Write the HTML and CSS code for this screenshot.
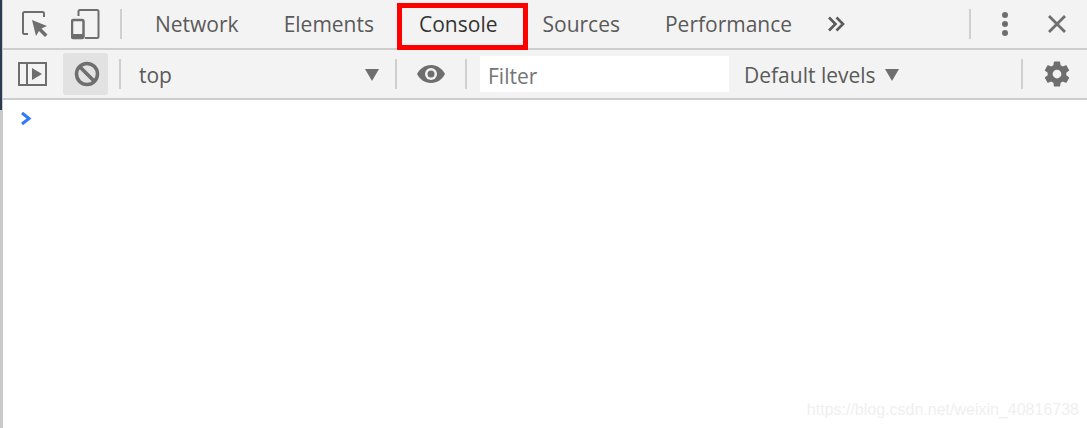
FILE: index.html
```html
<!DOCTYPE html>
<html lang="en">
<head>
  <meta charset="UTF-8">
  <title>DevTools Console</title>
  <link rel="stylesheet" href="styles.css">
</head>
<body>
  <div class="devtools">
    <div class="toolbar main-bar">
      <button class="icon-btn inspect-btn" aria-label="Select element">
        <svg width="26" height="26" viewBox="0 0 26 26">
          <path d="M6 23H2.500Q1 23 1 21.500V2.500Q1 1 2.500 1H20.500Q22 1 22 2.500V6" fill="none" stroke="#6e6e6e" stroke-width="2"/>
          <path d="M10 9L25 15L19.500 17.500L25.500 23.500L23 26L17 20L14 25Z" fill="#6e6e6e"/>
        </svg>
      </button>
      <button class="icon-btn device-btn" aria-label="Toggle device">
        <svg width="30" height="32" viewBox="0 0 30 32">
          <path d="M7.500 8V3.500Q7.500 2 9 2H26Q27.500 2 27.500 3.500V28.500Q27.500 30 26 30H14" fill="none" stroke="#6e6e6e" stroke-width="2"/>
          <rect x="1" y="12" width="11.500" height="18" rx="1.500" fill="none" stroke="#6e6e6e" stroke-width="2.500"/>
          <rect x="1" y="26" width="11.500" height="4" fill="#6e6e6e"/>
        </svg>
      </button>
      <span class="divider"></span>
      <nav class="tabs">
        <a class="tab">Network</a>
        <a class="tab">Elements</a>
        <a class="tab tab-active">Console</a>
        <a class="tab">Sources</a>
        <a class="tab">Performance</a>
      </nav>
      <svg class="more-tabs" width="18" height="16" viewBox="0 0 18 16">
        <path d="M2 1.500L8.500 8L2 14.500M9.500 1.500L16 8L9.500 14.500" fill="none" stroke="#5a5a5a" stroke-width="2.600"/>
      </svg>
      <span class="divider divider-right"></span>
      <svg class="menu-dots" width="8" height="26" viewBox="0 0 8 26">
        <circle cx="4" cy="4" r="3" fill="#6e6e6e"/>
        <circle cx="4" cy="13" r="3" fill="#6e6e6e"/>
        <circle cx="4" cy="22" r="3" fill="#6e6e6e"/>
      </svg>
      <svg class="close-x" width="20" height="20" viewBox="0 0 20 20">
        <path d="M2 2L18 18M18 2L2 18" stroke="#6e6e6e" stroke-width="2.800"/>
      </svg>
    </div>

    <div class="toolbar filter-bar">
      <button class="icon-btn sidebar-btn" aria-label="Show sidebar">
        <svg width="30" height="26" viewBox="0 0 30 26">
          <rect x="1" y="2" width="27" height="22" fill="none" stroke="#6e6e6e" stroke-width="2"/>
          <path d="M9 2V24" stroke="#6e6e6e" stroke-width="2"/>
          <path d="M14 7L24 13L14 19Z" fill="#6e6e6e"/>
        </svg>
      </button>
      <button class="icon-btn clear-btn" aria-label="Clear console">
        <svg width="26" height="26" viewBox="0 0 26 26">
          <circle cx="13" cy="13" r="10.500" fill="none" stroke="#6e6e6e" stroke-width="3.500"/>
          <path d="M6 6L20 20" stroke="#6e6e6e" stroke-width="3.500"/>
        </svg>
      </button>
      <span class="divider"></span>
      <div class="context-select">
        <span>top</span>
        <span class="arrow arrow-context"></span>
      </div>
      <span class="divider"></span>
      <svg class="eye" width="30" height="20" viewBox="0 0 30 20">
        <path d="M15 1C8.500 1 3.500 5 1 10C3.500 15 8.500 19 15 19C21.500 19 26.500 15 29 10C26.500 5 21.500 1 15 1Z" fill="#6e6e6e"/>
        <circle cx="15" cy="10" r="6" fill="#f3f3f3"/>
        <circle cx="15" cy="10" r="3.500" fill="#6e6e6e"/>
      </svg>
      <span class="divider"></span>
      <div class="filter-input">Filter</div>
      <div class="levels">
        <span>Default levels</span>
        <span class="arrow"></span>
      </div>
      <span class="divider divider-gear"></span>
      <svg class="gear" width="30" height="30" viewBox="0 0 24 24">
        <path fill="#6e6e6e" d="M19.400 13c.04-.33.06-.66.06-1s-.02-.67-.06-1l2.100-1.650c.2-.15.25-.42.12-.64l-2-3.460c-.12-.22-.38-.3-.6-.22l-2.500 1c-.5-.4-1.080-.72-1.680-.97L14.500 2.420A.5.500 0 0 0 14 2h-4c-.25 0-.46.18-.5.420L9.120 5.060c-.6.250-1.170.570-1.680.970l-2.500-1c-.22-.08-.48 0-.6.220l-2 3.460c-.13.220-.08.490.12.640L4.560 11c-.04.330-.06.670-.06 1s.02.670.06 1l-2.100 1.650c-.2.150-.25.420-.12.640l2 3.460c.12.220.38.300.6.220l2.500-1c.5.400 1.080.720 1.680.970l.38 2.640c.04.240.25.420.5.420h4c.25 0 .46-.18.500-.42l.38-2.640c.6-.25 1.170-.57 1.680-.97l2.500 1c.22.080.48 0 .6-.22l2-3.460c.13-.22.080-.49-.12-.64L19.400 13zM12 15.500a3.500 3.500 0 1 1 0-7 3.500 3.500 0 0 1 0 7z"/>
      </svg>
    </div>

    <div class="console-body">
      <svg class="prompt" width="12" height="15" viewBox="0 0 12 15">
        <path d="M2 2L9 7.500L2 13" fill="none" stroke="#2f7bf5" stroke-width="3"/>
      </svg>
      <span class="watermark">https://blog.csdn.net/weixin_40816738</span>
    </div>
  </div>
</body>
</html>
```

FILE: styles.css
```css
/* General Styles */
html, body {
  margin: 0;
  padding: 0;
  height: 100%;
  overflow: hidden;
}

body {
  font-family: 'Open Sans', 'Noto Sans', Arial, sans-serif;
  background: #fff;
  color: #5a5a5a;
}

.devtools {
  height: 428px;
  display: flex;
  flex-direction: column;
  border-left: 3px solid #cacaca;
  box-sizing: border-box;
  position: relative;
}

/* window edge behind the panel, dark along the top part */
.devtools::before {
  content: '';
  position: absolute;
  left: -3px;
  top: 0;
  width: 2px;
  height: 110px;
  background: #2b3a52;
}

.toolbar {
  display: flex;
  align-items: center;
  height: 48px;
  background: #f3f3f3;
  border-bottom: 2px solid #cdcdcd;
  flex: none;
}

.icon-btn {
  border: 0;
  padding: 0;
  background: none;
  display: flex;
  align-items: center;
  justify-content: center;
}

.divider {
  width: 2px;
  height: 30px;
  background: #cfcfcf;
  flex: none;
}

/* Top row */
.inspect-btn {
  margin-left: 19px;
}

.device-btn {
  margin-left: 23px;
  margin-right: 19px;
}

.tabs {
  display: flex;
  margin-left: 10.500px;
}

.tab {
  padding: 0 22.500px;
  font-size: 21px;
  line-height: 48px;
  color: #5a5a5a;
  position: relative;
}

.tab-active {
  color: #333;
}

.tab-active::after {
  content: '';
  position: absolute;
  left: 0;
  right: -8px;
  top: 3px;
  bottom: -2px;
  border: 5px solid #f00;
  box-sizing: border-box;
}

.more-tabs {
  margin-left: 12px;
}

.divider-right {
  margin-left: auto;
}

.menu-dots {
  margin-left: 30px;
}

.close-x {
  margin-left: 38px;
  margin-right: 20px;
}

/* Second row */
.sidebar-btn {
  margin-left: 15px;
}

.clear-btn {
  width: 45px;
  height: 42px;
  padding-left: 2px;
  margin-left: 15px;
  margin-right: 11px;
  background: #e2e2e2;
  border-radius: 3px;
}

.context-select {
  width: 274px;
  display: flex;
  align-items: center;
  justify-content: space-between;
  padding-left: 18px;
  padding-right: 16px;
  padding-top: 2px;
  box-sizing: border-box;
  font-size: 21px;
}

.arrow {
  width: 0;
  height: 0;
  border-left: 7px solid transparent;
  border-right: 7px solid transparent;
  border-top: 12px solid #6e6e6e;
}

.eye {
  margin-left: 19px;
  margin-right: 19px;
}

.filter-input {
  width: 249px;
  height: 36px;
  margin-left: 13px;
  padding-left: 8px;
  box-sizing: border-box;
  background: #fff;
  font-size: 21px;
  line-height: 40px;
  color: #757575;
}

.levels {
  display: flex;
  align-items: center;
  gap: 9px;
  margin-left: 15px;
  padding-top: 2px;
  font-size: 21px;
}

.divider-gear {
  margin-left: auto;
}

.gear {
  margin-left: 19px;
  margin-right: 15px;
}

/* Console area */
.console-body {
  flex: 1;
  position: relative;
  background: #fff;
}

.prompt {
  position: absolute;
  left: 17px;
  top: 11px;
}

.watermark {
  position: absolute;
  right: 8px;
  bottom: 9px;
  font-family: 'Liberation Sans', Arial, sans-serif;
  font-size: 16px;
  color: #efefef;
}
```
